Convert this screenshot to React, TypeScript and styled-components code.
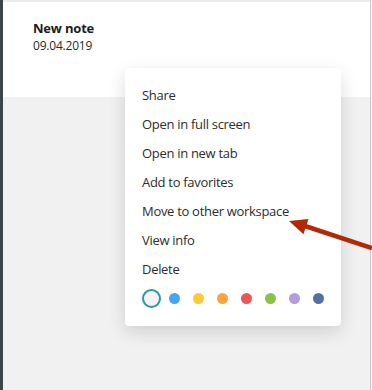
import React from 'react'
import styled, { createGlobalStyle } from 'styled-components'

const GlobalStyle = createGlobalStyle`
  html, body {
    margin: 0;
    padding: 0;
    background: #f1f1f1;
    font-family: 'Open Sans', 'Noto Sans', sans-serif;
  }
`

const Screen = styled.div`
  position: relative;
  width: 372px;
  height: 390px;
  display: flex;
  flex-flow: row nowrap;
  overflow: hidden;
  background: #f1f1f1;
`

const SideStrip = styled.div`
  width: 3px;
  background: #3c4649;
`

const Main = styled.div`
  flex: 1;
  display: flex;
  flex-direction: column;
`

const RightEdge = styled.div`
  width: 1px;
  border-left: 1px solid #c9c9c9;
  background: #fafafa;
`

const TopStrip = styled.div`
  height: 2px;
  background: #ebebeb;
`

const NoteCard = styled.div`
  height: 95px;
  background: #ffffff;
  padding: 17px 0 0 30px;
  box-sizing: border-box;
`

const NoteTitle = styled.div`
  font-size: 13px;
  font-weight: 700;
  line-height: 18px;
  letter-spacing: -0.2px;
  color: #1b1b1b;
`

const NoteDate = styled.div`
  font-size: 12px;
  line-height: 18px;
  letter-spacing: -0.2px;
  color: #2b2b2b;
`

const Menu = styled.div`
  position: absolute;
  left: 125px;
  top: 68px;
  width: 216px;
  height: 258px;
  box-sizing: border-box;
  padding: 12px 0 0 17px;
  background: #ffffff;
  border-radius: 4px;
  box-shadow: 0 6px 18px rgba(0, 0, 0, 0.14);
  display: flex;
  flex-direction: column;
`

const MenuItem = styled.div`
  height: 29px;
  display: flex;
  align-items: center;
  font-size: 13px;
  letter-spacing: -0.3px;
  color: #2d2d2d;
  cursor: pointer;
`

const Swatches = styled.div`
  display: flex;
  align-items: center;
  height: 19px;
  margin-top: 6px;
`

const Swatch = styled.div<{ $color: string; $selected?: boolean }>`
  width: ${(p) => (p.$selected ? '15px' : '11px')};
  height: ${(p) => (p.$selected ? '15px' : '11px')};
  border-radius: 50%;
  background: ${(p) => p.$color};
  border: ${(p) => (p.$selected ? '2px solid #2b9aa6' : 'none')};
  margin-right: ${(p) => (p.$selected ? '8px' : '13px')};
  flex-shrink: 0;
`

const Arrow = styled.svg`
  position: absolute;
  left: 280px;
  top: 210px;
  pointer-events: none;
`

const items = [
  'Share',
  'Open in full screen',
  'Open in new tab',
  'Add to favorites',
  'Move to other workspace',
  'View info',
  'Delete',
]

const colors = ['#42a5f5', '#fdca36', '#ffa23e', '#eb5657', '#8bc34a', '#b39ddb', '#5470a6']

const App: React.FC = () => {
  return (
    <>
      <GlobalStyle />
      <Screen>
        <SideStrip />
        <Main>
          <TopStrip />
          <NoteCard>
            <NoteTitle>New note</NoteTitle>
            <NoteDate>09.04.2019</NoteDate>
          </NoteCard>
        </Main>
        <RightEdge />
        <Menu>
          {items.map((item) => (
            <MenuItem key={item}>{item}</MenuItem>
          ))}
          <Swatches>
            <Swatch $color="#f3f3f3" $selected />
            {colors.map((c) => (
              <Swatch key={c} $color={c} />
            ))}
          </Swatches>
        </Menu>
        <Arrow width="92" height="50" viewBox="0 0 92 50">
          <line x1="92" y1="38" x2="22" y2="15" stroke="#b02a08" strokeWidth="4.5" />
          <polygon points="9,11 28.5,9 23.5,24.2" fill="#b02a08" />
        </Arrow>
      </Screen>
    </>
  )
}

export default App
